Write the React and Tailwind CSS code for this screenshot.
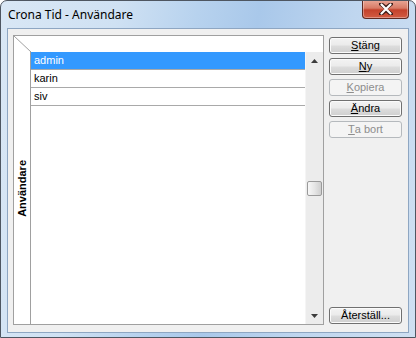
import React from 'react';

const UI_FONT = "font-['Liberation_Sans','Arial',sans-serif]";

const users = [
  { name: 'admin', selected: true },
  { name: 'karin', selected: false },
  { name: 'siv', selected: false },
];

// Classic Win7-style push button, mnemonic letter underlined
const Button = ({ mnemonic, rest, disabled }) => (
  <button
    className={`h-[17px] w-full rounded-[3px] border text-[11px] leading-none flex items-center justify-center ${
      disabled
        ? 'border-[#b5b9bd] bg-[#f4f4f4] text-[#8d8d8d]'
        : 'border-[#707070] bg-[linear-gradient(180deg,#f3f3f3_0%,#ebebeb_48%,#dddddd_52%,#cfcfcf_100%)] text-black shadow-[inset_0_0_0_1px_#fbfbfb]'
    }`}
  >
    {mnemonic && <span className="underline underline-offset-[1px]">{mnemonic}</span>}
    <span>{rest}</span>
  </button>
);

const App = () => {
  return (
    <div className={`w-[416px] h-[338px] ${UI_FONT} bg-white`}>
      <div className="w-full h-full flex flex-col rounded-t-[7px] border border-[#4e5661] bg-[linear-gradient(100deg,#d9e7f5_0%,#cfe1f3_25%,#b7d2ee_42%,#a9c8ea_55%,#bfd6ef_75%,#cfe0f2_100%)] overflow-hidden">
        {/* Title bar */}
        <div className="h-[27px] flex items-start justify-between shrink-0">
          <span className="pl-[7px] pt-[6px] text-[12px] text-black font-['Noto_Sans','Open_Sans',sans-serif] leading-[15px]">
            Crona Tid - Användare
          </span>
          <div className="mr-[6px] mt-[-1px] w-[47px] h-[19px] rounded-b-[4px] border border-[#5e2a22] border-t-0 bg-[linear-gradient(180deg,#e9a898_0%,#d87b66_45%,#c4422c_55%,#d25c43_100%)] shadow-[inset_0_0_0_1px_rgba(255,255,255,0.35)] flex items-center justify-center">
            <svg width="14" height="12" viewBox="0 0 14 12">
              <path d="M2 1 L7 5 L12 1 M2 11 L7 7 L12 11 M7 5 L7 7" stroke="#3b1d18" strokeWidth="4" strokeLinecap="round" fill="none" />
              <path d="M2.5 1.5 L11.5 10.5 M11.5 1.5 L2.5 10.5" stroke="#ffffff" strokeWidth="2.2" strokeLinecap="round" />
            </svg>
          </div>
        </div>

        {/* Client area */}
        <div className="mx-[6px] mb-[4px] flex-1 border border-[#8ea6c2] bg-[#f0f0f0] flex pl-[5px] pr-[6px] pt-[6px] pb-[7px] gap-[5px]">
          {/* Grid */}
          <div className="flex-1 border border-[#a0a0a0] bg-white flex flex-col">
            <div className="h-[16px] flex shrink-0">
              <svg width="17" height="16" viewBox="0 0 17 16" className="shrink-0">
                <line x1="0" y1="0" x2="17" y2="16" stroke="#a0a0a0" strokeWidth="1" />
              </svg>
            </div>
            <div className="flex-1 flex">
              <div className="w-[17px] border-r border-[#a0a0a0] flex items-center justify-center">
                <span className="[writing-mode:vertical-rl] rotate-180 text-[11px] font-bold text-black leading-none">
                  Användare
                </span>
              </div>
              <div className="flex-1 flex flex-col">
                {users.map((u) => (
                  <div
                    key={u.name}
                    className={`h-[18px] border-b border-[#a9a9a9] pl-[3px] text-[11px] leading-[17px] ${
                      u.selected ? 'bg-[#3399ff] text-white' : 'text-black'
                    }`}
                  >
                    {u.name}
                  </div>
                ))}
              </div>
              {/* Scrollbar */}
              <div className="w-[18px] bg-[#ececec] border-l border-[#f5f5f5] flex flex-col">
                <div className="h-[17px] flex items-center justify-center">
                  <svg width="7" height="4" viewBox="0 0 7 4">
                    <path d="M3.5 0 L7 4 L0 4 Z" fill="#3c3c3c" />
                  </svg>
                </div>
                <div className="flex-1 pt-[112px] flex flex-col items-center">
                  <div className="w-[15px] h-[15px] rounded-[2px] border border-[#9a9a9a] bg-[linear-gradient(90deg,#f7f7f7_0%,#e6e6e6_50%,#cfcfcf_100%)]" />
                </div>
                <div className="h-[17px] flex items-center justify-center">
                  <svg width="7" height="4" viewBox="0 0 7 4">
                    <path d="M0 0 L7 0 L3.5 4 Z" fill="#3c3c3c" />
                  </svg>
                </div>
              </div>
            </div>
          </div>

          {/* Buttons */}
          <div className="w-[73px] flex flex-col pt-[2px] gap-[4px]">
            <Button mnemonic="S" rest="täng" />
            <Button mnemonic="N" rest="y" />
            <Button mnemonic="K" rest="opiera" disabled />
            <Button mnemonic="Ä" rest="ndra" />
            <Button mnemonic="T" rest="a bort" disabled />
            <div className="mt-auto mb-[1px]">
              <Button rest="Återställ..." />
            </div>
          </div>
        </div>
      </div>
    </div>
  );
};

export default App;
